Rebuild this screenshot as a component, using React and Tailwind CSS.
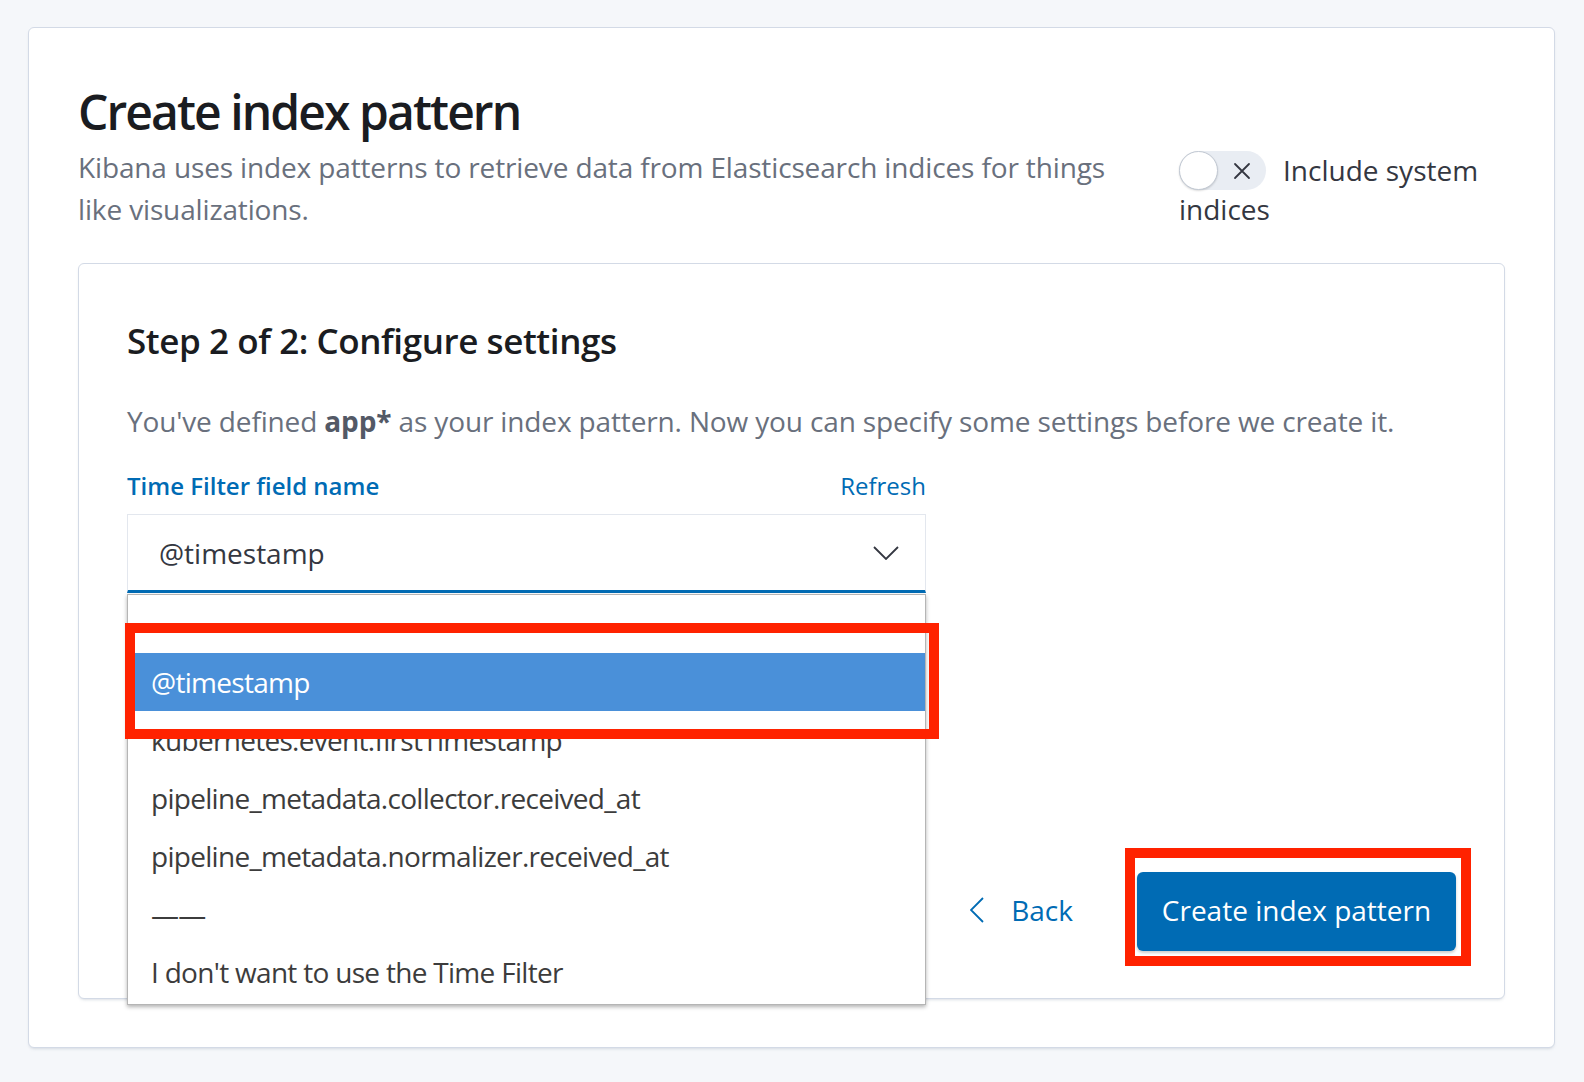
import React from "react";

const options = [
  "",
  "@timestamp",
  "kubernetes.event.firstTimestamp",
  "pipeline_metadata.collector.received_at",
  "pipeline_metadata.normalizer.received_at",
  "——",
  "I don't want to use the Time Filter",
];

function Toggle() {
  return (
    <span className="relative inline-flex align-top items-center w-[87px] h-[39px] rounded-full bg-[#e9edf3] mr-[17px]">
      <span className="absolute left-0 top-0 w-[39px] h-[39px] rounded-full bg-white border border-[#c2c9d3] shadow-[0_1px_2px_rgba(0,0,0,0.15)]" />
      <svg className="absolute left-[54px] top-[11px]" width="18" height="18" viewBox="0 0 18 18">
        <path d="M2 2 L16 16 M16 2 L2 16" stroke="#343741" strokeWidth="1.8" strokeLinecap="round" />
      </svg>
    </span>
  );
}

export default function App() {
  const selected = "@timestamp";

  return (
    <div className="min-h-screen bg-[#f5f7fa] pt-[27px] pl-[28px] pr-[29px] font-['Open_Sans',sans-serif] text-[#343741]">
      <div className="h-[1021px] bg-white border border-[#d3dae6] rounded-[6px] shadow-[0_2px_3px_-1px_rgba(152,162,179,0.35)] px-[49px] pt-[59px]">
        {/* header */}
        <div className="flex items-start justify-between">
          <div className="w-[1060px]">
            <h1 className="text-[48px] leading-[50px] font-semibold tracking-[-0.04em] text-[#1a1c21]">
              Create index pattern
            </h1>
            <p className="mt-[9px] text-[28px] leading-[42px] tracking-[-0.14px] text-[#69707d]">
              Kibana uses index patterns to retrieve data from Elasticsearch indices for things like visualizations.
            </p>
          </div>
          <div className="w-[326px] mt-[64px] text-[28px] leading-[39px] text-[#343741]">
            <Toggle />
            Include system indices
          </div>
        </div>

        {/* step panel */}
        <div className="mt-[33px] h-[736px] flex flex-col bg-white border border-[#d3dae6] rounded-[6px] shadow-[0_2px_3px_-1px_rgba(152,162,179,0.35)] px-[48px] pt-[56px] pb-[47px]">
          <h2 className="text-[35px] leading-[42px] font-semibold tracking-[-0.012em] text-[#1a1c21]">
            Step 2 of 2: Configure settings
          </h2>
          <p className="mt-[38px] text-[28px] leading-[42px] tracking-[-0.14px] text-[#69707d]">
            You've defined <strong className="font-bold text-[#535966]">app*</strong> as your index pattern. Now you can specify some settings before we create it.
          </p>

          <div className="w-[799px]">
            <div className="mt-[27px] flex items-center justify-between h-[34px] text-[24px]">
              <span className="font-semibold text-[#006bb4]">Time Filter field name</span>
              <span className="text-[#006bb4]">Refresh</span>
            </div>

            <div className="relative mt-[11px]">
              <div className="h-[79px] flex items-center justify-between bg-white border border-[#e3e7ee] border-b-[3px] border-b-[#006bb4] pl-[31px] pr-[26px] text-[28px] text-[#343741]">
                <span>{selected}</span>
                <svg width="26" height="14" viewBox="0 0 26 14">
                  <path d="M1 1 L13 13 L25 1" fill="none" stroke="#343741" strokeWidth="1.8" />
                </svg>
              </div>

              {/* open native select list */}
              <div className="absolute left-0 top-[80px] z-10 w-full h-[411px] bg-white border border-[#b5b5b5] shadow-[0_2px_4px_rgba(0,0,0,0.3)] text-[28px] tracking-[-0.7px] text-[#3c3c3c]">
                {options.map((o, i) => (
                  <div
                    key={i}
                    className={
                      i === 1
                        ? "h-[58px] flex items-center pl-[23px] bg-[#4a90d9] text-white"
                        : "h-[58px] flex items-center pl-[23px]"
                    }
                  >
                    {o}
                  </div>
                ))}
              </div>

              {/* annotation */}
              <div className="absolute left-[-2px] top-[109px] z-20 w-[814px] h-[116px] border-[10px] border-[#ff2200]" />
            </div>
          </div>

          <div className="mt-auto flex items-center justify-end">
            <button className="flex items-center text-[28px] text-[#006bb4] mr-[64px] -mt-[3px]">
              <svg width="14" height="26" viewBox="0 0 14 26" className="mr-[27px] ml-[3px]">
                <path d="M13 1 L1 13 L13 25" fill="none" stroke="#006bb4" strokeWidth="1.8" />
              </svg>
              Back
            </button>
            <div className="relative">
              <button className="w-[319px] h-[79px] rounded-[6px] bg-[#006bb4] text-white text-[28px] pb-[3px] shadow-[0_2px_3px_rgba(0,0,0,0.2)]">
                Create index pattern
              </button>
              <div className="absolute left-[-12px] top-[-24px] w-[346px] h-[118px] border-[10px] border-[#ff2200]" />
            </div>
          </div>
        </div>
      </div>
    </div>
  );
}
